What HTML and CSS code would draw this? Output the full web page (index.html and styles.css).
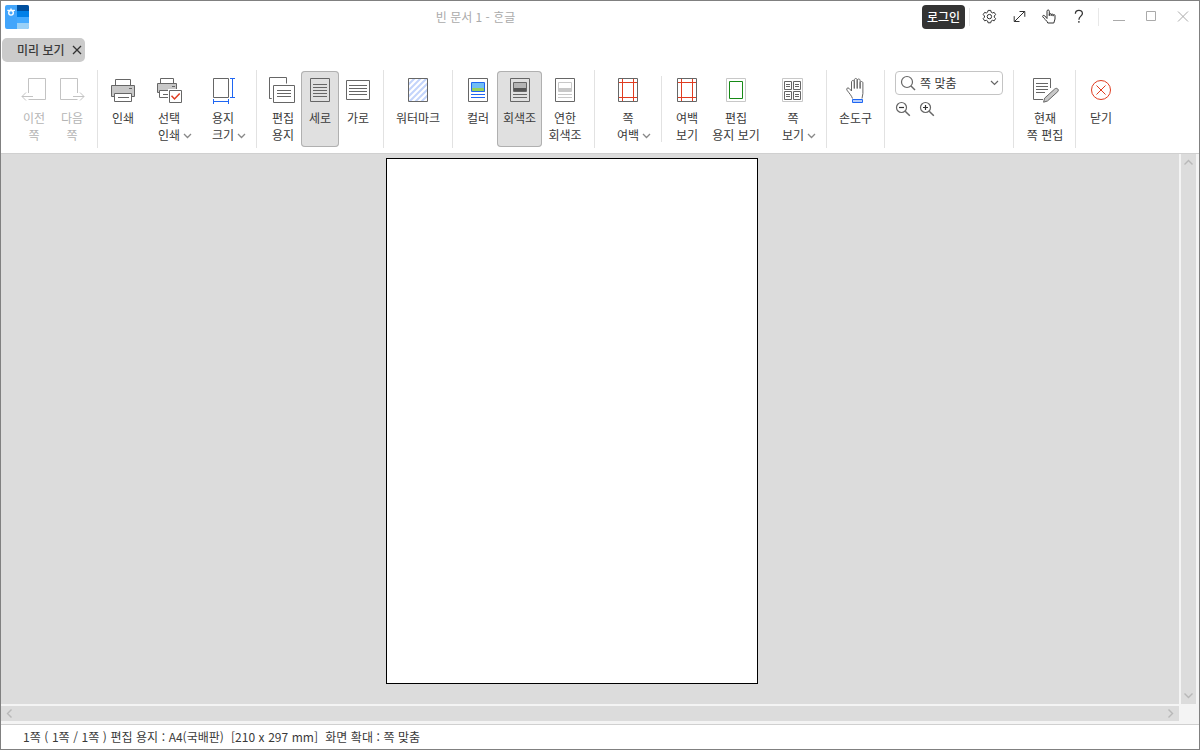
FILE: index.html
```html
<!DOCTYPE html>
<html lang="ko">
<head>
    <meta charset="UTF-8">
    <meta name="viewport" content="width=device-width, initial-scale=1.0">
    <title>빈 문서 1 - ᄒᆞᆫ글</title>
    <link rel="stylesheet" href="styles.css">
</head>
<body>
    <div class="window">
      <header class="titlebar">
        <svg class="logo" width="24" height="24" viewBox="0 0 24 24">
          <clipPath id="logo-clip"><rect width="24" height="24" rx="2"/></clipPath>
          <g clip-path="url(#logo-clip)" stroke="none">
            <rect width="24" height="24" fill="#42a5fb"/>
            <rect x="12" width="12" height="6" fill="#004f9e"/>
            <rect x="12" y="6" width="12" height="6" fill="#0080e8"/>
            <rect x="12" y="12" width="12" height="6" fill="#44aaff"/>
            <rect x="12" y="18" width="12" height="6" fill="#99d0f7"/>
          </g>
          <g fill="none" stroke="#fff" stroke-width="1.4">
            <path d="M6 3.4v2M2.3 5.4h7.6"/>
            <circle cx="6" cy="7.8" r="2.3"/>
          </g>
        </svg>
        <div class="doc-title">빈 문서 1 - ᄒᆞᆫ글</div>
        <button class="login">로그인</button>
        <nav class="tools">
          <svg width="30" height="30" viewBox="974 2 30 30">
            <path d="M987.6 12.2l.5-1.8h2.6l.5 1.8 1.2.7 1.8-.5 1.4 2.2-1.3 1.4v1.2l1.3 1.4-1.4 2.2-1.8-.5-1.2.7-.5 1.8h-2.6l-.5-1.8-1.2-.7-1.8.5-1.4-2.2 1.3-1.4V16l-1.3-1.4 1.4-2.2 1.8.5z"/>
            <circle cx="989.4" cy="16.6" r="2.2"/>
          </svg>
          <svg width="30" height="30" viewBox="1004 2 30 30"><path d="M1014.5 21.5l10-10M1019.5 11.5h5.3v5.3M1014.2 16.2v5.3h5.3"/></svg>
          <svg width="30" height="30" viewBox="1034 2 30 30"><path d="M1047 18.5v-7.300c0-1.700 2.300-1.700 2.300 0v4.500v-1.200c0-1.200 1.900-1.200 1.900 0v1.200v-.8c0-1.200 1.900-1.200 1.900 0v1.200v-.6c0-1.200 1.900-1.200 1.900 0v3.500c0 1.600-1.200 2.500-1.200 4h-6c-.4-2-4.200-4.700-5.100-6.300c-.5-1.200 1-1.800 2-.9z"/></svg>
          <svg width="30" height="30" viewBox="1064 2 30 30"><path d="M1075.400 13.800c0-4.600 7-4.600 7-.3c0 2.600-3.500 2.800-3.500 6.200M1078.900 21v1.700" stroke-width="1.300"/></svg>
        </nav>
        <div class="win-buttons">
          <svg width="32" height="30" viewBox="1103 2 32 30"><path d="M1113 20.500h12"/></svg>
          <svg width="32" height="30" viewBox="1135 2 32 30"><path d="M1146.500 11.500h9v9h-9z"/></svg>
          <svg width="32" height="30" viewBox="1167 2 32 30"><path d="M1178 11.500l10 10M1188 11.500l-10 10"/></svg>
        </div>
      </header>

      <div class="tabs">
        <div class="tab">
          <span>미리 보기</span>
          <svg width="10" height="10" viewBox="0 0 10 10"><path d="M1 1l8 8M9 1l-8 8"/></svg>
        </div>
      </div>

      <div class="ribbon">
        <div class="group g-move">
          <button class="item w38 disabled">
            <svg width="30" height="28" viewBox="19 76 30 28"><path d="M28.500 93V78.500h17v21h-17M33 96.500H22M26 92.500l-4 4 4 4"/></svg>
            <span>이전<br>쪽</span>
          </button>
          <button class="item w38 disabled">
            <svg width="30" height="28" viewBox="57 76 30 28"><path d="M77.500 93V78.500h-17v21h17M73 96.500h11M80 92.500l4 4-4 4"/></svg>
            <span>다음<br>쪽</span>
          </button>
        </div>

        <div class="group g-print">
          <button class="item w40">
            <svg width="30" height="28" viewBox="108 76 30 28">
              <path class="fill-white" d="M115.500 79.500h15v6h-15z"/>
              <path class="fill-gray" d="M111.500 85.500h23v11h-23z"/>
              <path d="M129 88.500h3"/>
              <path class="fill-white" d="M114.500 93.500h17v8h-17zM118 97.500h11"/>
            </svg>
            <span>인쇄</span>
          </button>
          <button class="item w52">
            <svg width="30" height="28" viewBox="154 76 30 28">
              <path class="fill-white" d="M160.500 78.500h13v5h-13z"/>
              <path class="fill-gray" d="M157.500 83.500h19v9h-19z"/>
              <path d="M172 86.500h3"/>
              <path class="fill-white" d="M159.500 90.500h14v7h-14zM163 94.500h8"/>
              <path class="halo" d="M168 89h15v15h-15z"/>
              <path class="fill-white" d="M169.500 90.500h12v12h-12z"/>
              <path class="red thick" d="M171.500 95.800l3 3.200 5.200-5.500"/>
            </svg>
            <span>선택<br>인쇄<svg class="arrow" width="9" height="6" viewBox="0 0 9 6"><path d="M1 1l3.500 3.500L8 1"/></svg></span>
          </button>
          <button class="item w56">
            <svg width="30" height="28" viewBox="208 76 30 28">
              <path d="M213.500 78.500h15v19h-15z"/>
              <path class="blue" d="M230 78.500h5M230 97.500h5M232.500 78v20M213.500 99v5M228.500 99v5M213 101.500h16"/>
            </svg>
            <span>용지<br>크기<svg class="arrow" width="9" height="6" viewBox="0 0 9 6"><path d="M1 1l3.500 3.500L8 1"/></svg></span>
          </button>
        </div>

        <div class="group g-paper">
          <button class="item w36">
            <svg width="30" height="28" viewBox="268 76 30 28">
              <path d="M271.500 98.500h-2v-21h17v6M269.500 98.500h2"/>
              <path class="fill-white" d="M273.500 85.500h21v17h-21zM277 90.500h14M277 93.500h14M277 96.500h14"/>
            </svg>
            <span>편집<br>용지</span>
          </button>
          <button class="item w38 active">
            <svg width="30" height="28" viewBox="305 76 30 28"><path d="M310.500 78.500h19v23h-19zM313 84.500h14M313 87.500h14M313 90.500h14M313 93.500h14M313 96.500h14"/></svg>
            <span>세로</span>
          </button>
          <button class="item w38">
            <svg width="30" height="28" viewBox="343 76 30 28"><path d="M346.500 80.500h23v19h-23zM349 85.500h18M349 88.500h18M349 91.500h18M349 94.500h18"/></svg>
            <span>가로</span>
          </button>
        </div>

        <div class="group g-mark">
          <button class="item w50">
            <svg width="30" height="28" viewBox="403 76 30 28">
              <clipPath id="mark-clip"><path d="M409 79h18v22h-18z"/></clipPath>
              <g clip-path="url(#mark-clip)"><path class="hatch" d="M403 90l15-15M403 96l21-21M403 102l27-27M406 105l25-25M412 105l20-20M418 105l15-15M424 105l10-10"/></g>
              <path d="M408.500 78.500h19v23h-19z"/>
            </svg>
            <span>워터마크</span>
          </button>
        </div>

        <div class="group g-color">
          <button class="item w38">
            <svg width="30" height="28" viewBox="463 76 30 28">
              <path class="fill-white" d="M468.500 78.500h19v23h-19z"/>
              <path fill="#70bdf5" stroke="none" d="M472 83h13v5h-13z"/>
              <path fill="#96d05c" stroke="none" d="M472 88h13v4h-13z"/>
              <path class="blue" d="M471.500 82.500h13v9h-13zM471 94.500h14M471 97.500h14"/>
            </svg>
            <span>컬러</span>
          </button>
          <button class="item w45 active">
            <svg width="31" height="28" viewBox="504 76 31 28">
              <path d="M510.500 78.500h19v23h-19z"/>
              <path fill="#b4b4b4" stroke="none" d="M514 83h12v5h-12z"/>
              <path fill="#555" stroke="none" d="M514 88h12v4h-12z"/>
              <path d="M513.500 82.500h13v9h-13zM513 94.500h14M513 97.500h14"/>
            </svg>
            <span>회색조</span>
          </button>
          <button class="item w46">
            <svg width="30" height="28" viewBox="550 76 30 28">
              <path d="M555.500 78.500h19v23h-19z"/>
              <path fill="#c8c8c8" stroke="none" d="M559 88h12v4h-12z"/>
              <path class="light" d="M558.500 82.500h13v9h-13zM558 94.500h14M558 97.500h14"/>
            </svg>
            <span>연한<br>회색조</span>
          </button>
        </div>

        <div class="group g-margin short">
          <button class="item w52">
            <svg width="30" height="28" viewBox="613 76 30 28">
              <path d="M618.500 78.500h19v23h-19z"/>
              <path class="red" d="M619 82.500h18M619 97.500h18M622.500 79v22M633.500 79v22"/>
            </svg>
            <span>쪽<br>여백<svg class="arrow" width="9" height="6" viewBox="0 0 9 6"><path d="M1 1l3.500 3.500L8 1"/></svg></span>
          </button>
        </div>

        <div class="group g-view">
          <button class="item w38">
            <svg width="30" height="28" viewBox="672 76 30 28">
              <path d="M677.500 78.500h19v23h-19z"/>
              <path class="red" d="M678 82.500h18M678 97.500h18M681.500 79v22M692.500 79v22"/>
            </svg>
            <span>여백<br>보기</span>
          </button>
          <button class="item w60">
            <svg width="30" height="28" viewBox="721 76 30 28">
              <path class="light" d="M726.500 78.500h19v23h-19z"/>
              <path class="green" d="M729.500 81.500h13v17h-13z"/>
            </svg>
            <span>편집<br>용지 보기</span>
          </button>
          <button class="item w54">
            <svg width="30" height="28" viewBox="778 76 30 28">
              <path class="light" d="M782.500 78.500h20v23h-20z"/>
              <path d="M784.500 81.500h7v8h-7zM793.500 81.500h7v8h-7zM784.500 91.500h7v8h-7zM793.500 91.500h7v8h-7z"/>
              <path d="M786 84.500h4M786 86.500h4M795 84.500h4M795 86.500h4M786 94.500h4M786 96.500h4M795 94.500h4M795 96.500h4"/>
            </svg>
            <span>쪽<br>보기<svg class="arrow" width="9" height="6" viewBox="0 0 9 6"><path d="M1 1l3.500 3.500L8 1"/></svg></span>
          </button>
        </div>

        <div class="group g-hand">
          <button class="item w41">
            <svg width="31" height="28" viewBox="840 76 31 28">
              <path d="M852.500 98.500c-1-3-3.500-5.500-5.500-8.300c-1-1.700.7-3 2-1.900l2.500 2.700V82c0-2 2.800-2 2.800 0v6.500V80c0-2 2.900-2 2.900 0v8.500V80.500c0-2 2.900-2 2.900 0v8V83c0-2 2.800-2 2.800 0v10.500c0 2-.9 3-.9 5"/>
              <path class="blue" fill="#b5cdfb" d="M852.500 99.500h10v3h-10z"/>
            </svg>
            <span>손도구</span>
          </button>
        </div>

        <div class="group g-zoom">
          <div class="combo">
            <svg width="16" height="16" viewBox="900 75 16 16"><circle cx="907" cy="82" r="5.500"/><path d="M911 86l4 4" stroke-width="1.500"/></svg>
            <span>쪽 맞춤</span>
            <svg width="9" height="6" viewBox="0 0 9 6"><path d="M1 1l3.500 3.500L8 1"/></svg>
          </div>
          <div class="zoom-buttons">
            <svg width="16" height="16" viewBox="895 101 16 16"><circle cx="901.500" cy="107.500" r="5"/><path d="M905.200 111.200l4.600 4.600" stroke-width="1.500"/><path class="sign" d="M899 107.500h5"/></svg>
            <svg width="16" height="16" viewBox="895 101 16 16"><circle cx="901.500" cy="107.500" r="5"/><path d="M905.200 111.200l4.600 4.600" stroke-width="1.500"/><path class="sign" d="M899 107.500h5M901.500 105v5"/></svg>
          </div>
        </div>

        <div class="group g-edit">
          <button class="item w50">
            <svg width="30" height="28" viewBox="1030 76 30 28">
              <path d="M1043 99.500h-9.500v-21h17v9.500M1036 83.500h12M1036 86.500h12M1036 89.500h12M1036 92.500h9"/>
              <path class="fill-gray" d="M1043.600 102.200l1-4 10.200-9.300c2-1.700 4.600.8 3 2.700l-10.300 9.400z"/>
            </svg>
            <span>현재<br>쪽 편집</span>
          </button>
        </div>

        <div class="group g-close">
          <button class="item w40">
            <svg width="30" height="28" viewBox="1086 76 30 28"><g class="red"><circle cx="1101" cy="90" r="9.500"/><path d="M1096.500 85.500l9 9M1105.500 85.500l-9 9"/></g></svg>
            <span>닫기</span>
          </button>
        </div>
      </div>

      <main class="preview">
        <div class="canvas">
          <div class="page"></div>
        </div>
        <div class="scroll vertical">
          <svg width="11" height="7" viewBox="0 0 11 7"><path d="M1.500 5.500l4-4 4 4"/></svg>
          <svg width="11" height="7" viewBox="0 0 11 7"><path d="M1.500 1.500l4 4 4-4"/></svg>
        </div>
        <div class="scroll horizontal">
          <svg width="7" height="11" viewBox="0 0 7 11"><path d="M5.500 1.500l-4 4 4 4"/></svg>
          <svg width="7" height="11" viewBox="0 0 7 11"><path d="M1.500 1.500l4 4-4 4"/></svg>
        </div>
      </main>

      <footer class="status">1쪽 ( 1쪽 / 1쪽 ) 편집 용지 : A4(국배판)&nbsp; [210 x 297 mm]&nbsp; 화면 확대 : 쪽 맞춤</footer>
    </div>
</body>
</html>
```
FILE: styles.css
```css
*{
  padding: 0;
  margin: 0;
  box-sizing: border-box;
}
body{
  font-family: "Noto Sans CJK KR", sans-serif;
  font-size: 12px;
  color: #3a3a3a;
  overflow: hidden;
}
button{
  font: inherit;
  color: inherit;
  background: none;
  border: none;
}
svg{
  display: block;
  flex: none;
  fill: none;
  stroke: #666;
  stroke-width: 1;
}
.window{
  width: 1200px;
  height: 750px;
  border: 1px solid #808080;
  background: #fff;
  display: flex;
  flex-direction: column;
}

/* title bar */
.titlebar{
  height: 36px;
  display: flex;
  align-items: flex-start;
  padding-top: 1px;
}
.logo{
  margin: 3px 0 0 4px;
}
.doc-title{
  width: 893px;
  text-align: center;
  line-height: 30px;
  color: #aaa;
}
.login{
  width: 43px;
  height: 24px;
  margin-top: 3px;
  border-radius: 4px;
  background: #333;
  color: #fff;
  font-weight: 500;
  line-height: 22px;
}
.tools{
  display: flex;
  margin-left: 4px;
  padding-left: 5px;
}
.tools svg{
  stroke: #333;
}
.tools, .win-buttons{
  background: linear-gradient(#e8e8e8, #e8e8e8) 0 6px / 1px 18px no-repeat;
}
.win-buttons{
  display: flex;
  margin-left: 4px;
  padding-left: 5px;
}
.win-buttons svg{
  stroke: #aaa;
}

/* tabs */
.tabs{
  height: 27px;
  padding: 1px;
}
.tab{
  width: 83px;
  height: 24px;
  padding: 0 3px 0 15px;
  display: flex;
  align-items: center;
  justify-content: space-between;
  border-radius: 5px;
  background: #cbcbcb;
  line-height: 22px;
  font-weight: 500;
}
.tab svg{
  stroke: #333;
  stroke-width: 1.3;
}

/* ribbon */
.ribbon{
  height: 90px;
  padding-top: 6px;
  border-bottom: 1px solid #d0d0d0;
  display: flex;
}
.group{
  height: 78px;
  padding-top: 1px;
  display: flex;
  background: linear-gradient(#e2e2e2, #e2e2e2) right 0 / 1px 78px no-repeat;
}
.short{
  background-size: 1px 66px;
  background-position: right 6px;
}
.g-move{ width: 97px; padding-left: 14px; }
.g-print{ width: 159px; padding-left: 5px; }
.g-paper{ width: 127px; padding-left: 8px; }
.g-mark{ width: 69px; padding-left: 9px; }
.g-color{ width: 142px; padding-left: 6px; }
.g-margin{ width: 67px; padding-left: 7px; }
.g-view{ width: 165px; padding-left: 6px; }
.g-hand{ width: 58px; padding-left: 8px; }
.g-zoom{ width: 129px; padding-left: 10px; display: block; }
.g-edit{ width: 62px; padding-left: 6px; }
.g-close{ padding-left: 5px; background: none; }

.item{
  height: 76px;
  padding-top: 5px;
  display: flex;
  flex-direction: column;
  align-items: center;
  border-radius: 4px;
  line-height: 17px;
  white-space: nowrap;
}
.item span{
  margin-top: 5px;
}
.w36{ width: 36px; }
.w38{ width: 38px; }
.w40{ width: 40px; }
.w41{ width: 41px; }
.w45{ width: 45px; }
.w46{ width: 46px; }
.w50{ width: 50px; }
.w52{ width: 52px; }
.w54{ width: 54px; }
.w56{ width: 56px; }
.w60{ width: 60px; }
.active{
  background: #e0e0e0;
  box-shadow: inset 0 0 0 1px #b0b0b0;
}
.disabled{
  color: #b4b4b4;
}
.disabled svg{
  stroke: #c3c3c3;
}
.item .arrow{
  display: inline-block;
  margin: 0 -12px 1px 3px;
  stroke: #888;
  stroke-width: 1.3;
}
.fill-white{ fill: #fff; }
.fill-gray{ fill: #c8c8c8; }
.halo{ fill: #fff; stroke: none; }
.blue{ stroke: #1f66f2; }
.red{ stroke: #e03c20; }
.green{ stroke: #168a16; }
.light{ stroke: #c8c8c8; }
.thick{ stroke-width: 1.5; }
.hatch{ stroke: #c3d4fb; stroke-width: 2; }

.combo{
  width: 108px;
  height: 24px;
  padding: 0 3px 0 4px;
  display: flex;
  align-items: center;
  border: 1px solid #c4c4c4;
  border-radius: 4px;
  line-height: 22px;
}
.combo svg, .zoom-buttons svg{
  stroke-width: 1.2;
}
.combo span{
  flex: 1;
  margin-left: 4px;
}
.zoom-buttons{
  display: flex;
  gap: 8px;
  margin-top: 6px;
}
.zoom-buttons .sign{
  stroke: #333;
}

/* preview area */
.preview{
  height: 571px;
  display: grid;
  grid-template-columns: 1178px 15px;
  grid-template-rows: 550px 15px;
  gap: 2px;
  background: #f4f4f4;
  border-bottom: 1px solid #d0d0d0;
}
.canvas{
  background: #dcdcdc;
  padding: 4px 0 0 385px;
}
.page{
  width: 372px;
  height: 526px;
  border: 1px solid #000;
  background: #fff;
}
.scroll{
  display: flex;
  align-items: center;
  justify-content: space-between;
  background: #dcdcdc;
}
.scroll svg{
  stroke: #b8b8b8;
  stroke-width: 1.4;
}
.vertical{
  flex-direction: column;
  padding: 5px 0;
}
.horizontal{
  padding: 0 5px;
}

.status{
  flex: 1;
  padding-left: 22px;
  line-height: 23px;
  word-spacing: .22px;
}
```
